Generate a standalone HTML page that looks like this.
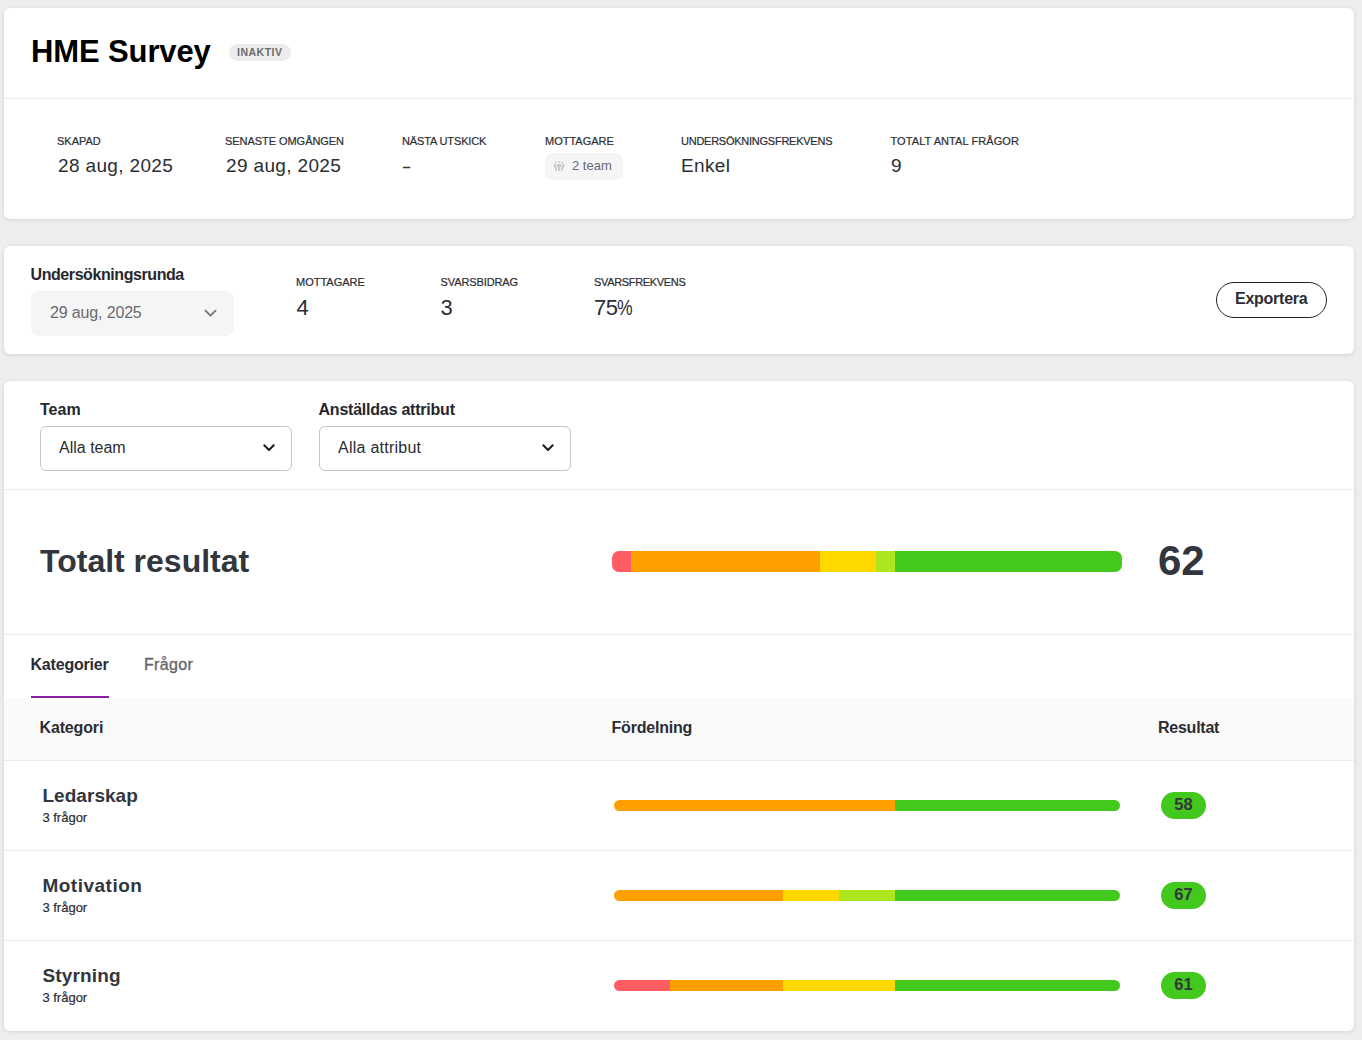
<!DOCTYPE html>
<html lang="sv">
<head>
<meta charset="utf-8">
<title>HME Survey</title>
<style>
*{box-sizing:border-box;margin:0;padding:0}
html,body{width:1362px;height:1040px;overflow:hidden}
body{background:#eeeeee;font-family:"Liberation Sans",Arial,sans-serif;color:#2b2d33;position:relative}
.card{position:absolute;left:4px;width:1350px;background:#fff;border-radius:6px;box-shadow:0 1px 4px rgba(0,0,0,.12)}
.abs{position:absolute;white-space:nowrap;line-height:1}
.hr{position:absolute;left:0;right:0;height:1px;background:#ececec}
.lbl{font-size:11px;color:#2b2d33;letter-spacing:0;-webkit-text-stroke:.2px #2b2d33}
.val{font-size:19px;color:#2b2d33;letter-spacing:.35px}
.val2{font-size:22px;color:#2b2d33}
.b{font-weight:bold}
.seg{height:100%;float:left}
.bar{position:absolute;overflow:hidden}
.c1{background:#ff5c63}.c2{background:#ff9f00}.c3{background:#ffd800}.c4{background:#ade61e}.c5{background:#43c81e}
.pill{position:absolute;width:45px;height:27px;border-radius:14px;background:#43c81e;left:1161px;text-align:center;font-weight:bold;font-size:16.5px;line-height:24px;color:#33363d}
.sel{position:absolute;height:45px;width:252px;border:1px solid #c4c4c4;border-radius:6px;background:#fff}
</style>
</head>
<body>

<!-- CARD 1 -->
<div class="card" style="top:8px;height:211px"></div>
<div class="abs b" id="title" style="left:31px;top:36.4px;font-size:31px;letter-spacing:-.12px;color:#000">HME Survey</div>
<div class="abs" id="badge" style="left:229px;top:44.2px;width:62px;height:17.2px;border-radius:9px;background:#ececec"></div>
<div class="abs b" id="badgetxt" style="left:237px;top:47px;font-size:10.5px;letter-spacing:.5px;color:#6b6b6b">INAKTIV</div>
<div class="hr" style="top:98px;left:4px;right:8px"></div>

<div class="abs lbl" id="l1" style="left:57px;top:136px">SKAPAD</div>
<div class="abs val" id="v1" style="left:58px;top:156px">28 aug, 2025</div>
<div class="abs lbl" id="l2" style="left:225px;letter-spacing:-.05px;top:136px">SENASTE OMGÅNGEN</div>
<div class="abs val" id="v2" style="left:226px;top:156px">29 aug, 2025</div>
<div class="abs lbl" id="l3" style="left:402px;letter-spacing:-.13px;top:136px">NÄSTA UTSKICK</div>
<div class="abs val" id="v3" style="left:403.3px;top:161.3px;font-size:12px;letter-spacing:0;-webkit-text-stroke:.4px #2b2d33">–</div>
<div class="abs lbl" id="l4" style="left:545px;top:136px">MOTTAGARE</div>
<div class="abs" id="chip" style="left:545px;top:153px;width:78px;height:27px;border-radius:8px;background:#f5f5f5"></div>
<svg class="abs" id="chipicon" style="left:553px;top:160px" width="12" height="12" viewBox="0 0 12 12" fill="#c9c9c9">
<circle cx="6.05" cy="2" r="1.1"/><circle cx="3" cy="2.45" r=".95"/><circle cx="9.1" cy="2.45" r=".95"/>
<path d="M4.4 4h3.3a.4.4 0 0 1 .4.4v2.2a.4.4 0 0 1-.4.4h-.6v3.9h-2.1v-3.9h-.6a.4.4 0 0 1-.4-.4v-2.2a.4.4 0 0 1 .4-.4z"/>
<path d="M1.6 4h1.7c-.5 1-.5 2.300.6 3.400v3.400h-1.800v-3.100c-.9-.2-1.300-.8-1.300-1.700v-1.200c0-.5.300-.8.800-.8z"/>
<path d="M10.500 4h-1.700c.5 1 .5 2.300-.6 3.400v3.400h1.800v-3.100c.9-.2 1.300-.8 1.300-1.700v-1.200c0-.5-.300-.8-.8-.8z"/>
</svg>
<div class="abs" id="chiptxt" style="left:572px;top:158.5px;font-size:13px;color:#666a75">2 team</div>
<div class="abs lbl" id="l5" style="left:681px;letter-spacing:-.25px;top:136px">UNDERSÖKNINGSFREKVENS</div>
<div class="abs val" id="v5" style="left:681px;top:156px">Enkel</div>
<div class="abs lbl" id="l6" style="left:890.5px;letter-spacing:.08px;top:136px">TOTALT ANTAL FRÅGOR</div>
<div class="abs val" id="v6" style="left:891px;top:156px">9</div>

<!-- CARD 2 -->
<div class="card" style="top:246px;height:108px"></div>
<div class="abs b" id="urlbl" style="left:30.5px;top:266.5px;font-size:16px;letter-spacing:-.42px;color:#26272d">Undersökningsrunda</div>
<div class="abs" id="sel0" style="left:31px;top:291px;width:203px;height:45px;border-radius:8px;background:#f5f5f5"></div>
<div class="abs" id="sel0txt" style="left:50px;top:305px;font-size:16px;letter-spacing:-.15px;color:#6a6a70">29 aug, 2025</div>
<svg class="abs" id="chev0" style="left:204px;top:308.6px" width="13" height="9" viewBox="0 0 13 9" fill="none" stroke="#77787d" stroke-width="1.9" stroke-linecap="round" stroke-linejoin="round"><path d="M1.5 1.7 L6.5 6.7 L11.5 1.7"/></svg>

<div class="abs lbl" id="m1" style="left:296px;top:277px">MOTTAGARE</div>
<div class="abs val2" id="mv1" style="left:296.5px;top:297px">4</div>
<div class="abs lbl" id="m2" style="left:440.5px;letter-spacing:-.1px;top:277px">SVARSBIDRAG</div>
<div class="abs val2" id="mv2" style="left:440.5px;top:297px">3</div>
<div class="abs lbl" id="m3" style="left:594px;letter-spacing:-.33px;top:277px">SVARSFREKVENS</div>
<div class="abs val2" id="mv3" style="left:594px;top:297px;letter-spacing:-.6px">75<span style="display:inline-block;transform:scaleX(.8);transform-origin:0 50%">%</span></div>

<div class="abs" id="expbtn" style="left:1216px;top:282px;width:111px;height:36px;border:1px solid #222;border-radius:18px;background:#fff"></div>
<div class="abs b" id="exptxt" style="left:1235px;top:291px;font-size:16px;letter-spacing:-.25px;color:#2b2d33">Exportera</div>

<!-- CARD 3 -->
<div class="card" style="top:381px;height:650px"></div>
<div class="abs b" id="teamlbl" style="left:40px;top:402px;font-size:16px;color:#26272d">Team</div>
<div class="sel" id="sel1" style="left:40px;top:426px"></div>
<div class="abs" id="sel1txt" style="left:59px;top:440px;font-size:16px;color:#2b2d33">Alla team</div>
<svg class="abs" id="chev1" style="left:262px;top:443px" width="14" height="10" viewBox="0 0 14 10" fill="none" stroke="#1a1c22" stroke-width="2" stroke-linecap="round" stroke-linejoin="round"><path d="M2.3 2.3 L7 7 L11.7 2.3"/></svg>
<div class="abs b" id="attrlbl" style="left:318.5px;top:402px;font-size:16px;letter-spacing:-.22px;color:#26272d">Anställdas attribut</div>
<div class="sel" id="sel2" style="left:319px;top:426px"></div>
<div class="abs" id="sel2txt" style="left:338px;top:440px;font-size:16px;letter-spacing:.25px;color:#2b2d33">Alla attribut</div>
<svg class="abs" id="chev2" style="left:541px;top:443px" width="14" height="10" viewBox="0 0 14 10" fill="none" stroke="#1a1c22" stroke-width="2" stroke-linecap="round" stroke-linejoin="round"><path d="M2.3 2.3 L7 7 L11.7 2.3"/></svg>
<div class="hr" style="top:489px;left:4px;right:8px"></div>

<div class="abs b" id="tot" style="left:40px;top:545px;font-size:32px;color:#33363d">Totalt resultat</div>
<div class="bar" id="bar0" style="left:612px;top:551px;width:510px;height:21px;border-radius:7px">
<div class="seg c1" style="width:3.7037%"></div><div class="seg c2" style="width:37.037%"></div><div class="seg c3" style="width:11.1111%"></div><div class="seg c4" style="width:3.7037%"></div><div class="seg c5" style="width:44.4445%"></div></div>
<div class="abs b" id="score" style="left:1158px;top:540px;font-size:42px;color:#33363d">62</div>
<div class="hr" style="top:634px;left:4px;right:8px"></div>

<div class="abs b" id="tab1" style="left:30.5px;top:656.5px;font-size:16px;letter-spacing:-.2px;color:#2b2d33">Kategorier</div>
<div class="abs" id="tab2" style="left:144px;top:656.5px;font-size:16px;letter-spacing:.35px;color:#63646b;-webkit-text-stroke:.3px #63646b">Frågor</div>
<div class="abs" id="tabul" style="left:31px;top:695.5px;width:78px;height:2.6px;background:#8a1fa0"></div>
<div class="abs" id="thead" style="left:4px;top:698px;width:1350px;height:62px;background:#fafafa;border-radius:6px 6px 0 0"></div>
<div class="hr" style="top:760px;left:4px;right:8px"></div>
<div class="abs b" id="th1" style="left:39.5px;top:720px;font-size:16px;letter-spacing:-.15px;color:#2b2d33">Kategori</div>
<div class="abs b" id="th2" style="left:611.5px;top:720px;font-size:16px;letter-spacing:-.2px;color:#2b2d33">Fördelning</div>
<div class="abs b" id="th3" style="left:1158px;top:720px;font-size:16px;letter-spacing:-.25px;color:#2b2d33">Resultat</div>

<!-- rows -->
<div class="abs b" id="r1t" style="left:42.4px;letter-spacing:.05px;top:786px;font-size:19px;color:#33363d">Ledarskap</div>
<div class="abs" id="r1s" style="left:42.4px;-webkit-text-stroke:.2px #2b2d33;top:811px;font-size:13px;color:#2b2d33">3 frågor</div>
<div class="bar" id="bar1" style="left:614px;top:800px;width:506px;height:11px;border-radius:6px">
<div class="seg c2" style="width:55.5556%"></div><div class="seg c5" style="width:44.4444%"></div></div>
<div class="pill" id="p1" style="top:792px">58</div>
<div class="hr" style="top:850px;left:4px;right:8px"></div>

<div class="abs b" id="r2t" style="left:42.4px;letter-spacing:.5px;top:876px;font-size:19px;color:#33363d">Motivation</div>
<div class="abs" id="r2s" style="left:42.4px;-webkit-text-stroke:.2px #2b2d33;top:901px;font-size:13px;color:#2b2d33">3 frågor</div>
<div class="bar" id="bar2" style="left:614px;top:890px;width:506px;height:11px;border-radius:6px">
<div class="seg c2" style="width:33.3333%"></div><div class="seg c3" style="width:11.1111%"></div><div class="seg c4" style="width:11.1111%"></div><div class="seg c5" style="width:44.4445%"></div></div>
<div class="pill" id="p2" style="top:882px">67</div>
<div class="hr" style="top:940px;left:4px;right:8px"></div>

<div class="abs b" id="r3t" style="left:42.4px;letter-spacing:.15px;top:966px;font-size:19px;color:#33363d">Styrning</div>
<div class="abs" id="r3s" style="left:42.4px;-webkit-text-stroke:.2px #2b2d33;top:991px;font-size:13px;color:#2b2d33">3 frågor</div>
<div class="bar" id="bar3" style="left:614px;top:980px;width:506px;height:11px;border-radius:6px">
<div class="seg c1" style="width:11.1111%"></div><div class="seg c2" style="width:22.2222%"></div><div class="seg c3" style="width:22.2222%"></div><div class="seg c5" style="width:44.4445%"></div></div>
<div class="pill" id="p3" style="top:972px">61</div>

</body>
</html>
